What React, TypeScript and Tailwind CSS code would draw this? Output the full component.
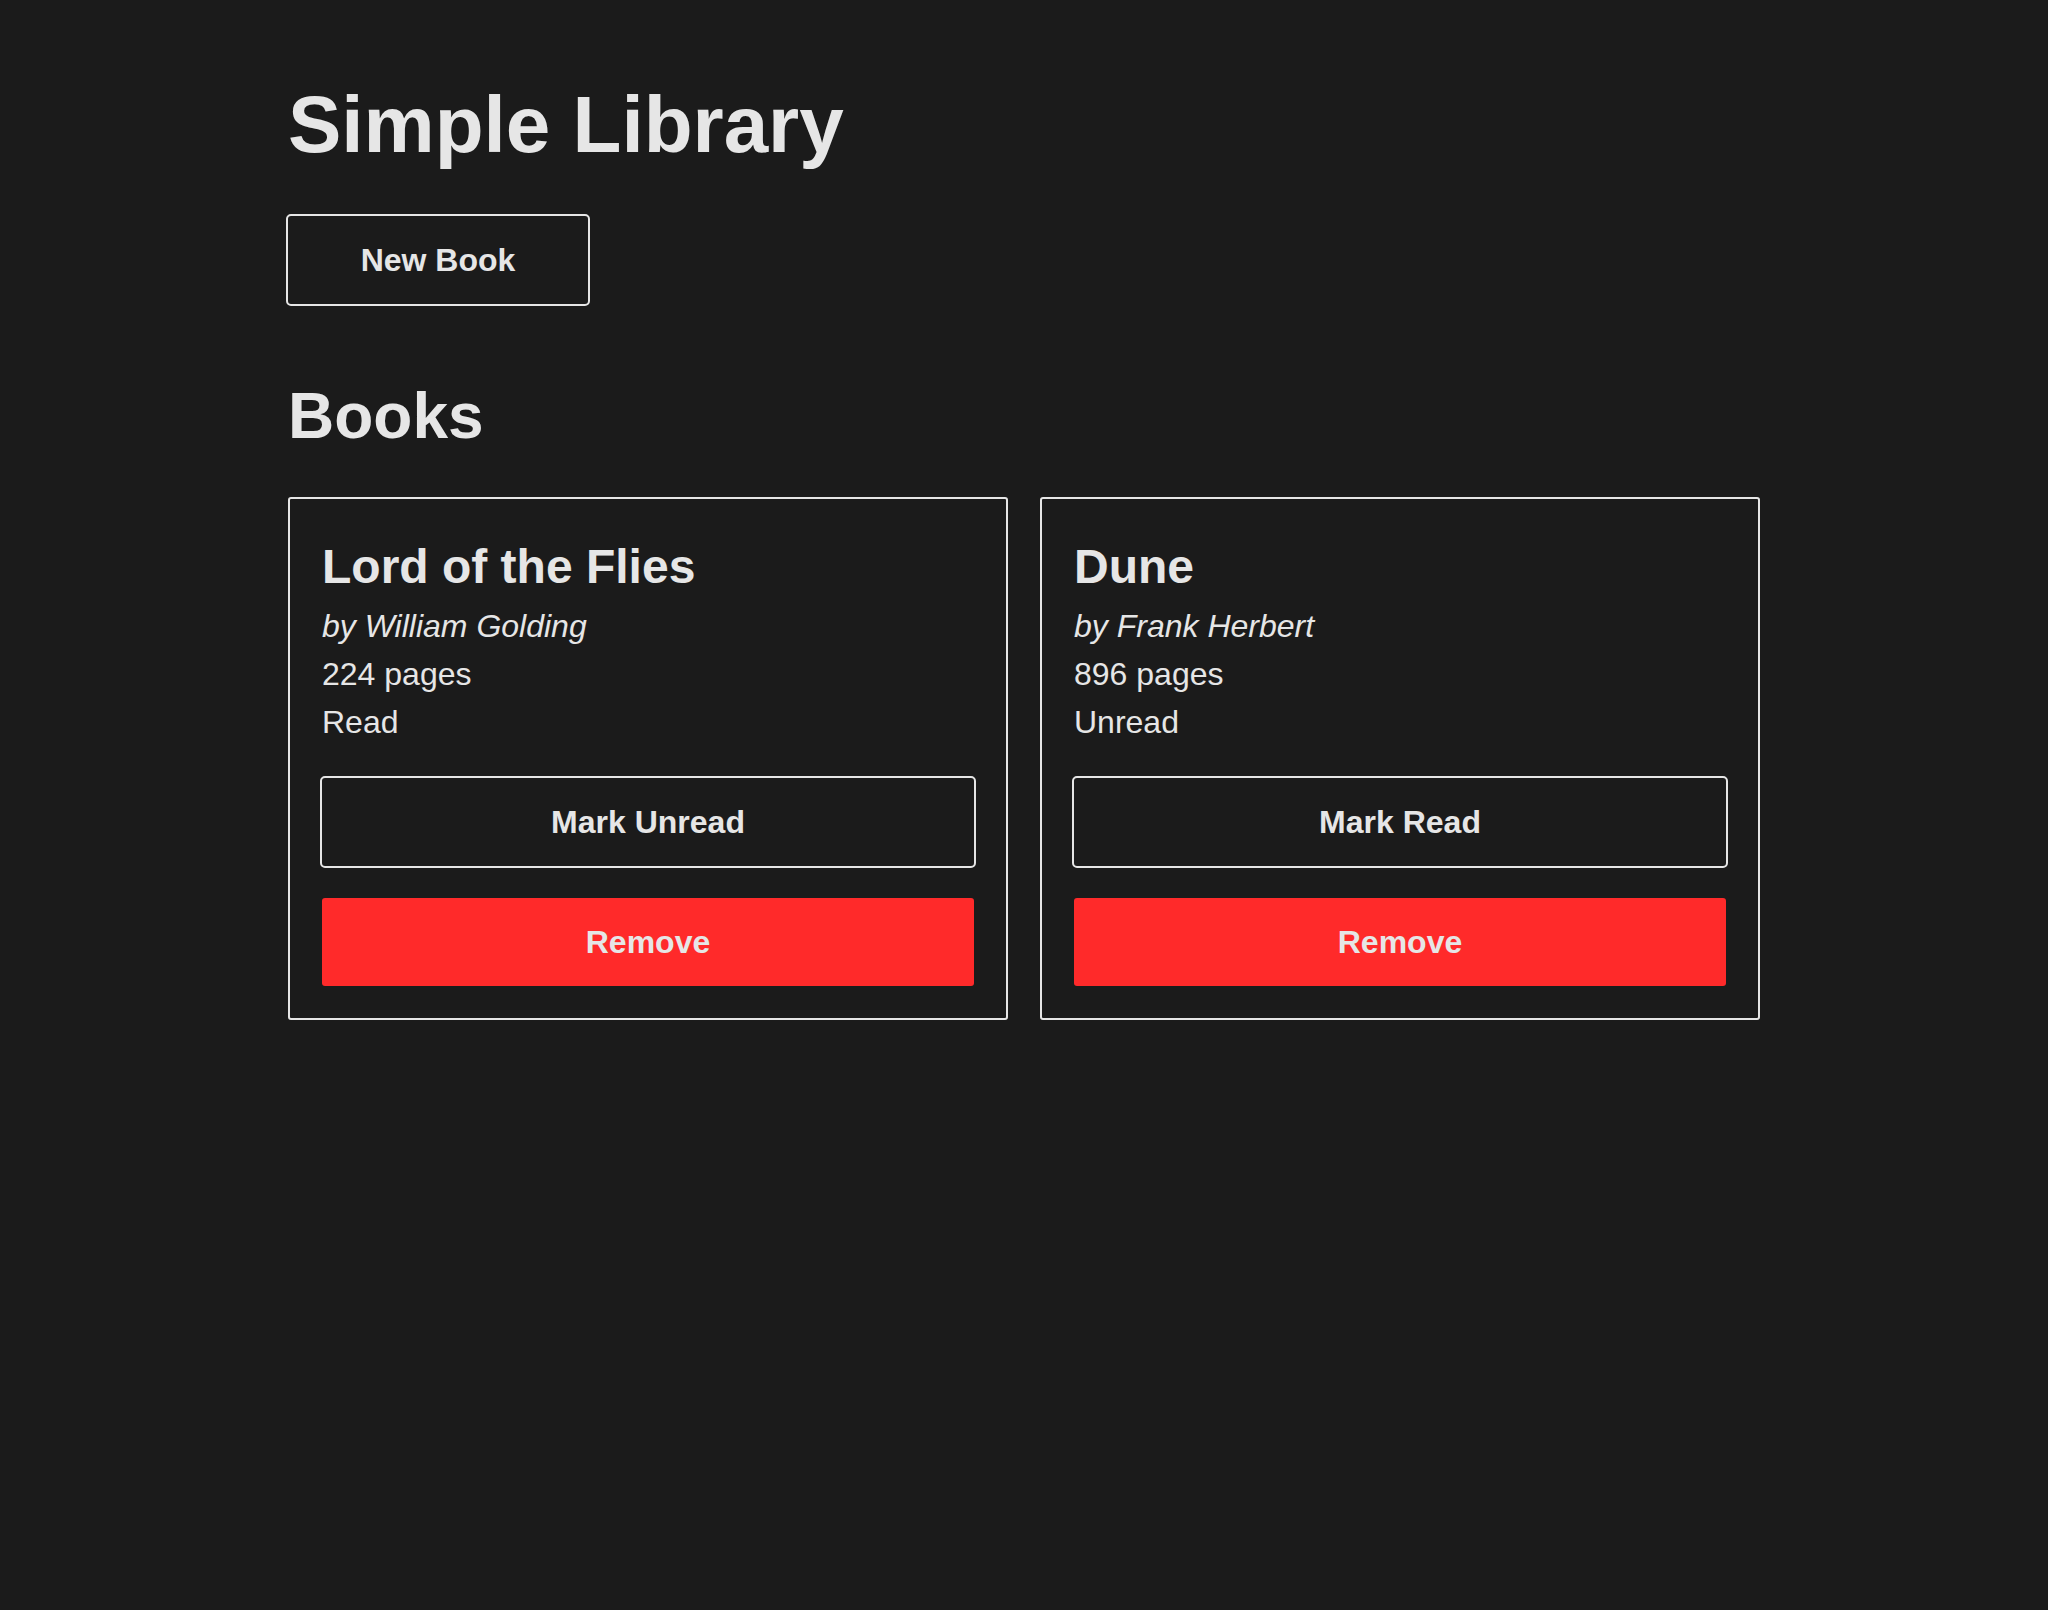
import { useState } from "react";

type Book = {
  id: number;
  title: string;
  author: string;
  pages: number;
  read: boolean;
};

export default function App() {
  const [books, setBooks] = useState<Book[]>([
    { id: 1, title: "Lord of the Flies", author: "William Golding", pages: 224, read: true },
    { id: 2, title: "Dune", author: "Frank Herbert", pages: 896, read: false },
  ]);

  const toggleRead = (id: number) =>
    setBooks((prev) => prev.map((b) => (b.id === id ? { ...b, read: !b.read } : b)));

  const removeBook = (id: number) => setBooks((prev) => prev.filter((b) => b.id !== id));

  return (
    <div className="min-h-screen bg-[#1b1b1b] text-[#e6e6e6] font-['Liberation_Sans',Arial,sans-serif]">
      <div className="mx-auto w-[1472px] pt-[77px] pb-20">
        <h1 className="text-[80px] font-bold leading-[96px]">Simple Library</h1>

        <button className="mt-[43px] h-[88px] w-[300px] rounded-[3px] text-[32px] font-bold outline-2 outline-[#e6e6e6]">
          New Book
        </button>

        <h2 className="mt-[74px] text-[64px] font-bold leading-[76px]">Books</h2>

        {/* Book cards */}
        <div className="mt-[43px] grid grid-cols-2 gap-8">
          {books.map((book) => (
            <div key={book.id} className="rounded-[3px] border-2 border-[#e6e6e6] p-8">
              <h3 className="text-[48px] font-bold leading-[71px]">{book.title}</h3>
              <p className="text-[32px] italic leading-[48px]">by {book.author}</p>
              <p className="text-[32px] leading-[48px]">{book.pages} pages</p>
              <p className="text-[32px] leading-[48px]">{book.read ? "Read" : "Unread"}</p>
              <div className="mt-8 flex flex-col gap-8">
                <button
                  onClick={() => toggleRead(book.id)}
                  className="h-[88px] w-full rounded-[3px] text-[32px] font-bold outline-2 outline-[#e6e6e6]"
                >
                  {book.read ? "Mark Unread" : "Mark Read"}
                </button>
                <button
                  onClick={() => removeBook(book.id)}
                  className="h-[88px] w-full rounded-[3px] bg-[#ff2a2a] text-[32px] font-bold"
                >
                  Remove
                </button>
              </div>
            </div>
          ))}
        </div>
      </div>
    </div>
  );
}
